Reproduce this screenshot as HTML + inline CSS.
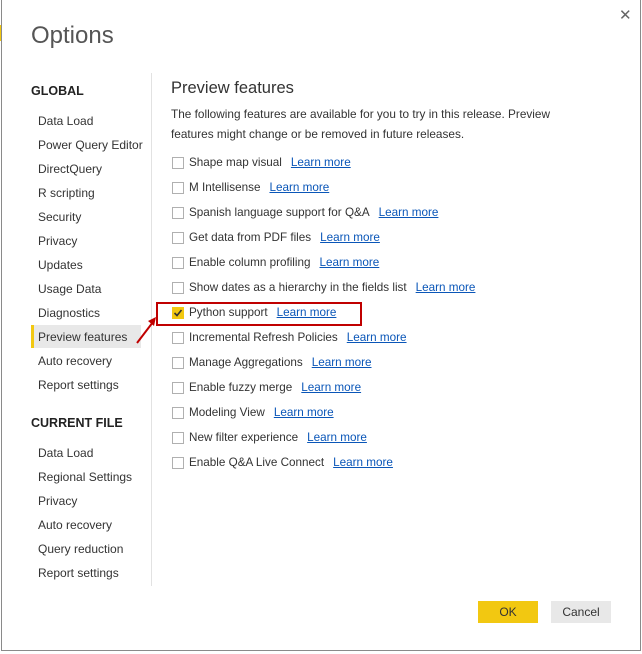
<!DOCTYPE html>
<html><head><style>
body{margin:0;width:642px;height:654px;background:#fff;font-family:"Liberation Sans",sans-serif;position:relative;overflow:hidden;color:#333}
.dlg{position:absolute;left:1px;top:0;width:638px;height:650px;border:1px solid #8a8a8a;border-top:none;box-sizing:content-box}
.a{position:absolute;white-space:nowrap}
.nav{font-size:12px;color:#333}
.hd{font-size:12.5px;font-weight:bold;color:#222}
.cb{position:absolute;width:10px;height:10px;border:1px solid #b0b0b0;background:#fff}
.lbl{font-size:11.7px;color:#333}
.lm{color:#0a56b8;text-decoration:underline;margin-left:9px}
</style></head><body>
<div class="a" style="left:0;top:25px;width:2px;height:16px;background:#f2c811"></div>
<div class="dlg"></div>
<div class="a" style="left:619px;top:6px;font-size:15px;color:#666">✕</div>
<div class="a" style="left:31px;top:22px;font-size:24px;color:#555">Options</div>
<div class="a hd" style="left:31px;top:84px">GLOBAL</div>
<div class="a" style="left:31px;top:325px;width:110px;height:23px;background:#e8e8e8;border-left:3px solid #f2c811;box-sizing:border-box"></div>
<div class="a" style="left:151px;top:73px;width:1px;height:513px;background:#e2e2e2"></div>
<div class="nav">
<div class="a" style="left:38px;top:114px">Data Load</div>
<div class="a" style="left:38px;top:138px">Power Query Editor</div>
<div class="a" style="left:38px;top:162px">DirectQuery</div>
<div class="a" style="left:38px;top:186px">R scripting</div>
<div class="a" style="left:38px;top:210px">Security</div>
<div class="a" style="left:38px;top:234px">Privacy</div>
<div class="a" style="left:38px;top:258px">Updates</div>
<div class="a" style="left:38px;top:282px">Usage Data</div>
<div class="a" style="left:38px;top:306px">Diagnostics</div>
<div class="a" style="left:38px;top:330px">Preview features</div>
<div class="a" style="left:38px;top:354px">Auto recovery</div>
<div class="a" style="left:38px;top:378px">Report settings</div>
<div class="a hd" style="left:31px;top:416px">CURRENT FILE</div>
<div class="a" style="left:38px;top:446px">Data Load</div>
<div class="a" style="left:38px;top:470px">Regional Settings</div>
<div class="a" style="left:38px;top:494px">Privacy</div>
<div class="a" style="left:38px;top:518px">Auto recovery</div>
<div class="a" style="left:38px;top:542px">Query reduction</div>
<div class="a" style="left:38px;top:566px">Report settings</div>
</div>
<div class="a" style="left:171px;top:79px;font-size:16.5px;color:#333">Preview features</div>
<div class="a" style="left:171px;top:104px;font-size:11.8px;line-height:20px;color:#333">The following features are available for you to try in this release. Preview<br>features might change or be removed in future releases.</div>
<div class="a" style="left:156px;top:302px;width:206px;height:24px;border:2px solid #c00000;box-sizing:border-box"></div>
<svg class="a" style="left:134px;top:312px" width="26" height="34"><line x1="3" y1="31" x2="19" y2="10" stroke="#c00000" stroke-width="2"/><polygon points="22,5 14,9 20,14" fill="#c00000"/></svg>
<div id="rows"></div>
<div class="a" style="left:478px;top:601px;width:60px;height:22px;background:#f2c811;font-size:12px;text-align:center;line-height:22px;color:#333">OK</div>
<div class="a" style="left:551px;top:601px;width:60px;height:22px;background:#e8e8e8;font-size:12px;text-align:center;line-height:22px;color:#333">Cancel</div>
<script>
var items=["Shape map visual","M Intellisense","Spanish language support for Q&A","Get data from PDF files","Enable column profiling","Show dates as a hierarchy in the fields list","Python support","Incremental Refresh Policies","Manage Aggregations","Enable fuzzy merge","Modeling View","New filter experience","Enable Q&A Live Connect"];
var h="";items.forEach(function(t,i){var y=157+i*25;var c=i==6;
h+='<div class="cb" style="left:172px;top:'+y+'px;'+(c?'background:#f2c811;border-color:#f2c811':'')+'">'+(c?'<svg width="10" height="10" style="position:absolute;left:0;top:0"><path d="M1.5 5 L4 7.5 L8.5 2" stroke="#333" stroke-width="1.6" fill="none"/></svg>':'')+'</div>';
h+='<div class="a lbl" style="left:189px;top:'+(y-1)+'px">'+t.replace("&","&amp;")+'<span class="lm">Learn more</span></div>';});
document.getElementById("rows").innerHTML=h;
</script>
</body></html>
